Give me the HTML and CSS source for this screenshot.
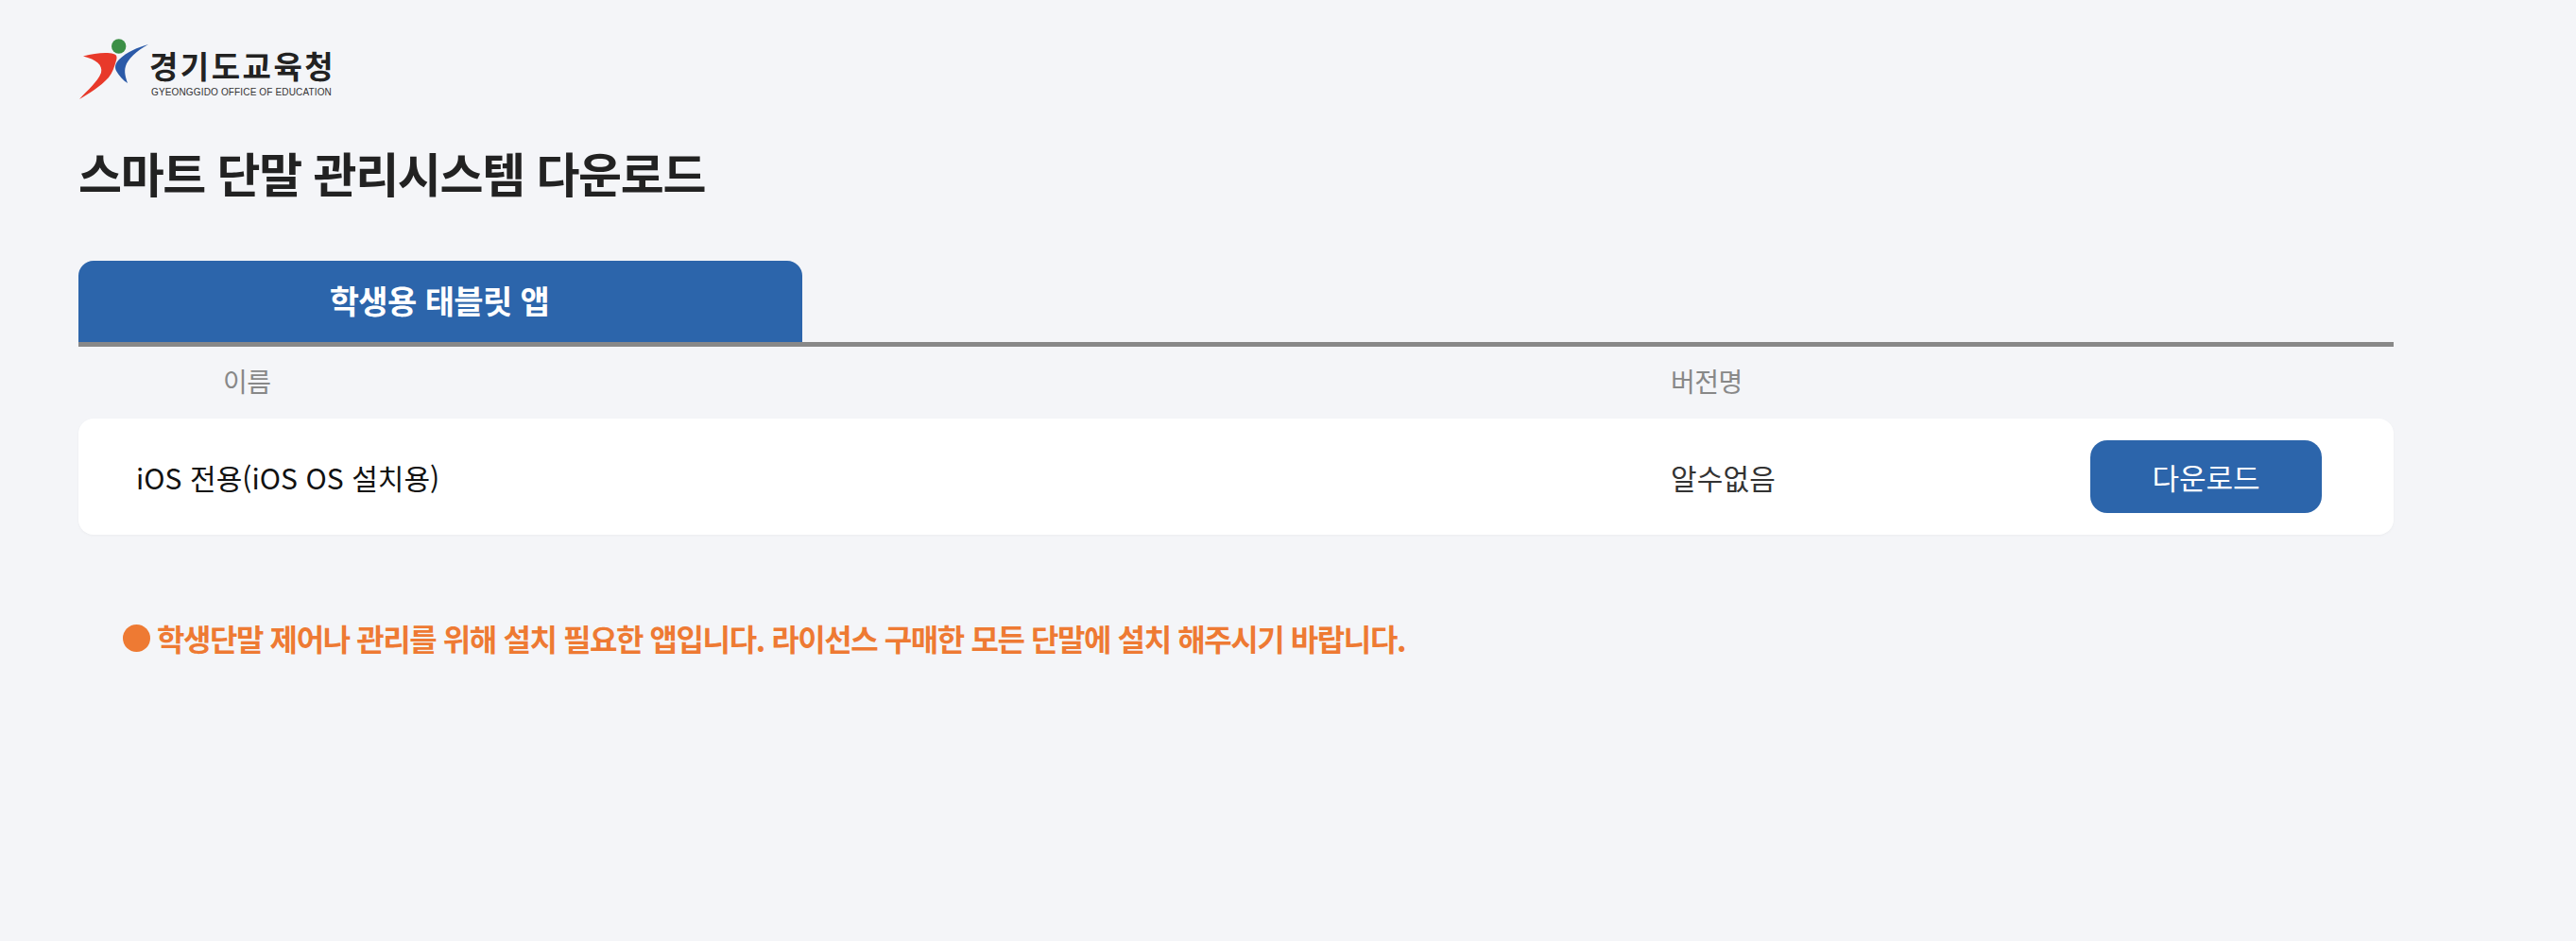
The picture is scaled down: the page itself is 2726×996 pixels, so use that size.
FILE: index.html
```html
<!DOCTYPE html>
<html lang="ko">
<head>
<meta charset="utf-8">
<title>스마트 단말 관리시스템 다운로드</title>
<link rel="stylesheet" href="styles.css">
</head>
<body>
<main class="page">
  <div class="logo">
    <svg class="logo-mark" viewBox="13 10 75 66" width="75" height="66" aria-hidden="true">
      <circle cx="55.7" cy="19" r="7.7" fill="#3c8f46"/>
      <path d="M18 29.5C30 26 44 25 50 27C54 28 54 31 53 34C51 41 49 47 45 52C36 62 24 69 14 75C23 65 33 57 37 47C39 39 32 33 18 29.5Z" fill="#e8392a"/>
      <path d="M87 17C76 20 64 25 56 33C52 37 51 41 53 45C56 50 60 55 65 58C63 52 61 46 63 40C65 33 74 24 87 17Z" fill="#2b5aa8"/>
    </svg>
    <div class="logo-text">
      <div class="logo-kr">경기도교육청</div>
      <div class="logo-en">GYEONGGIDO OFFICE OF EDUCATION</div>
    </div>
  </div>
  <h1 class="title">스마트 단말 관리시스템 다운로드</h1>
  <div class="tabs"><div class="tab">학생용 태블릿 앱</div></div>
  <div class="table">
    <div class="row head">
      <div class="col-name head-name">이름</div>
      <div class="col-ver">버전명</div>
      <div class="col-act"></div>
    </div>
    <div class="row item">
      <div class="col-name item-name">iOS 전용(iOS OS 설치용)</div>
      <div class="col-ver">알수없음</div>
      <div class="col-act"><button class="btn" type="button">다운로드</button></div>
    </div>
  </div>
  <p class="note"><span class="dot"></span>학생단말 제어나 관리를 위해 설치 필요한 앱입니다. 라이선스 구매한 모든 단말에 설치 해주시기 바랍니다.</p>
</main>
</body>
</html>
```
FILE: styles.css
```css
* { box-sizing: border-box; }
html, body { margin: 0; height: 100%; }
body {
  background: #f4f5f8;
  font-family: "Noto Sans CJK KR", "Noto Sans", sans-serif;
  color: #222;
}
.page { width: 2450px; margin-left: 83px; padding-top: 40px; }
.logo { display: flex; height: 66px; }
.logo-mark { display: block; flex: none; }
.logo-text { padding-top: 9px; }
.logo-kr { font-size: 33px; line-height: 40px; font-weight: 700; letter-spacing: 2.5px; color: #222; white-space: nowrap; }
.logo-en { font-family: "Liberation Sans", sans-serif; font-size: 10px; line-height: 14px; letter-spacing: 0.15px; color: #333; padding-left: 2px; margin-top: 2px; white-space: nowrap; }
.title { margin: 40px 0 0; font-size: 50px; line-height: 72px; font-weight: 700; letter-spacing: -1.35px; color: #222; }
.tabs { margin-top: 58px; display: flex; border-bottom: 5px solid #888; }
.tab {
  width: 766px; height: 86px;
  background: #2c65ab; color: #fff;
  border-radius: 16px 16px 0 0;
  font-size: 34px; font-weight: 700; letter-spacing: -0.6px;
  display: flex; align-items: center; justify-content: center;
  padding: 0 2px 4px 0;
}
.row { display: flex; align-items: center; }
.col-name { width: 1685px; flex: none; }
.col-ver { flex: 1; }
.col-act { width: 245px; flex: none; margin-right: 76px; }
.head { height: 76px; color: #888; font-size: 28px; letter-spacing: -0.5px; padding-bottom: 5px; }
.head-name { padding-left: 153px; }
.item {
  height: 123px; background: #fff; border-radius: 16px;
  font-size: 30px; letter-spacing: 0.15px; color: #333;
  box-shadow: 0 1px 3px rgba(0,0,0,.04);
}
.item-name { padding-left: 61px; color: #111; letter-spacing: 0.05px; }
.btn {
  width: 245px; height: 77px; border: 0; border-radius: 18px;
  background: #2c65ab; color: #fff; font: inherit; font-size: 31px; letter-spacing: 0; padding: 0;
  display: block;
}
.note {
  margin: 86px 0 0 47px; font-size: 32px; line-height: 46px; font-weight: 700; letter-spacing: -1.42px;
  color: #ee7a33; display: flex; align-items: center; white-space: nowrap;
}
.dot { width: 29px; height: 29px; border-radius: 50%; background: #ee7a33; margin-right: 7px; flex: none; }
```
